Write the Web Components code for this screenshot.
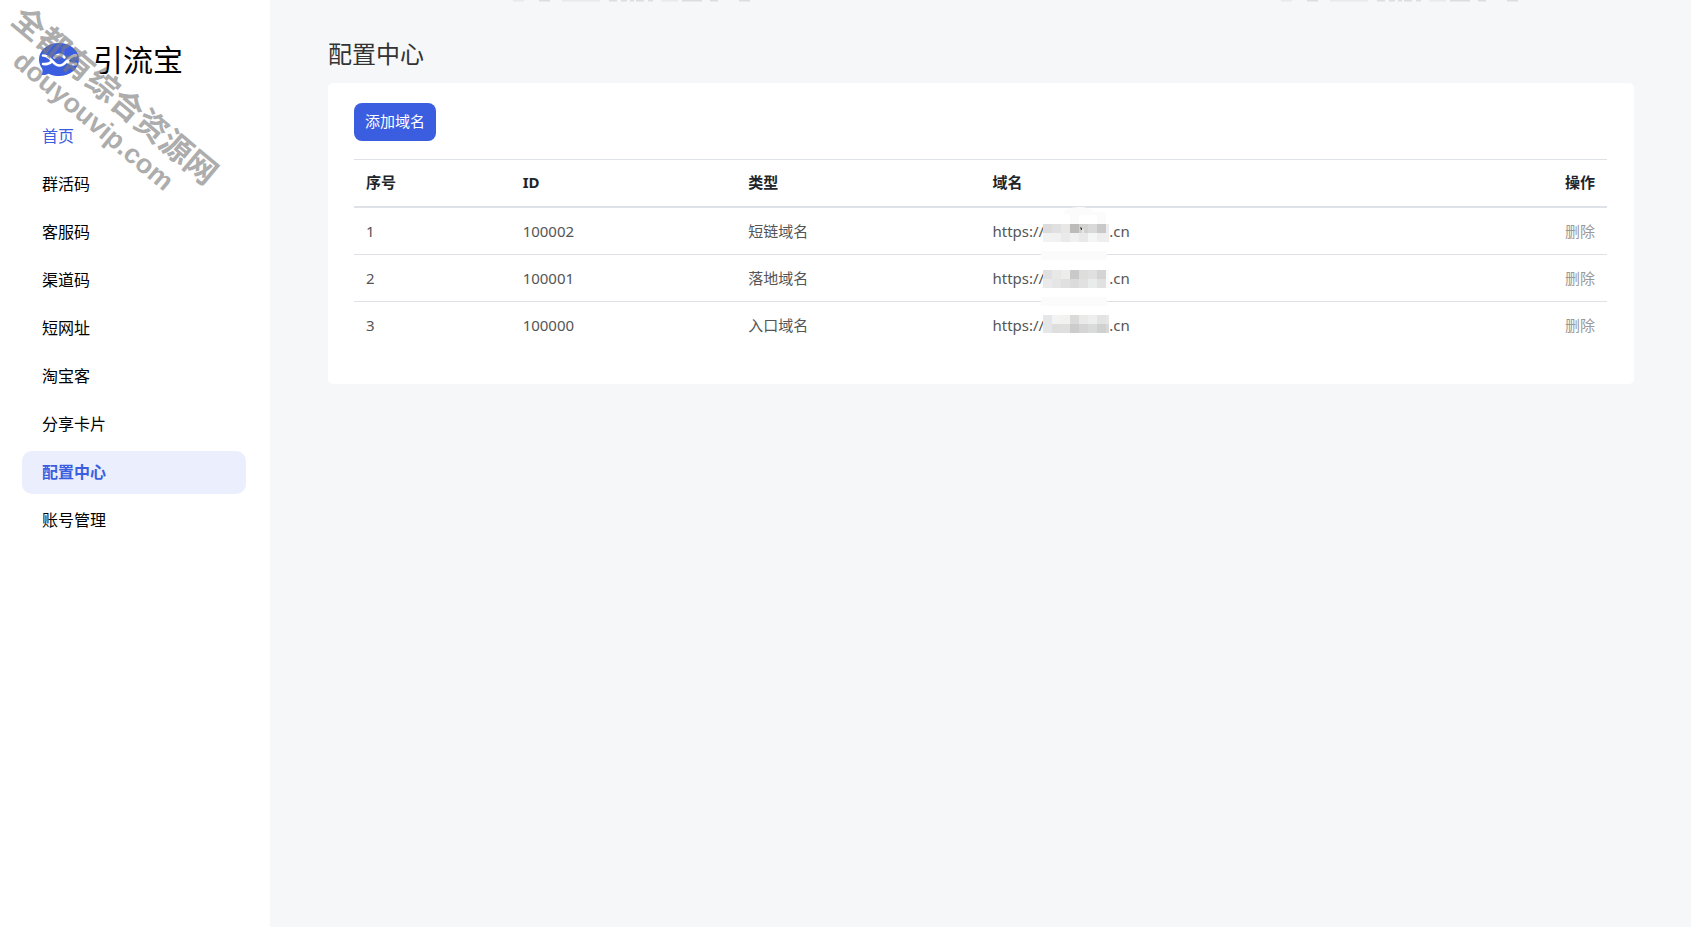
<!DOCTYPE html>
<html lang="zh-CN">
<head>
<meta charset="utf-8">
<meta name="viewport" content="width=device-width, initial-scale=1">
<title>配置中心 - 引流宝</title>
<style>
  body { margin: 0; background: #f5f7f9; color: #212529; font-family: "Noto Sans", "Noto Sans CJK SC", sans-serif; font-size: 15px; }
</style>
</head>
<body>
<app-shell>
  <brand-logo slot="side" name="引流宝"></brand-logo>
  <side-nav slot="side">
    <nav-item tone="home">首页</nav-item>
    <nav-item>群活码</nav-item>
    <nav-item>客服码</nav-item>
    <nav-item>渠道码</nav-item>
    <nav-item>短网址</nav-item>
    <nav-item>淘宝客</nav-item>
    <nav-item>分享卡片</nav-item>
    <nav-item active>配置中心</nav-item>
    <nav-item>账号管理</nav-item>
  </side-nav>
  <page-title>配置中心</page-title>
  <content-card>
    <primary-button>添加域名</primary-button>
    <domain-table></domain-table>
  </content-card>
</app-shell>
<water-mark></water-mark>
<edge-mark></edge-mark>

<script>
const define = (name, html, setup) => {
  const template = document.createElement('template');
  template.innerHTML = html;
  customElements.define(name, class extends HTMLElement {
    constructor() {
      super();
      this.attachShadow({ mode: 'open' }).append(template.content.cloneNode(true));
    }
    connectedCallback() { if (setup) setup(this, this.shadowRoot); }
  });
};

define('app-shell', `
<style>
  :host { display: grid; grid-template-columns: 270px minmax(0, 1fr); min-height: 100vh; }
  aside { background: #fff; }
  main { padding: 36px 57px 36px 58px; }
</style>
<aside><slot name="side"></slot></aside>
<main><slot></slot></main>`);

define('brand-logo', `
<style>
  :host { display: flex; align-items: center; gap: 14px; height: 75px; padding: 22px 0 18px 39px; color: #000; font-size: 30px; line-height: 38px; }
  svg { width: 40px; height: 34px; flex: none; }
</style>
<svg viewBox="0 0 40 34" aria-hidden="true">
  <path fill="#3b5ee0" d="M20 0C31 0 40 7 40 16.500C40 26 31 33 20 33C16 33 12.500 32.200 9.500 30.700C7.500 31.800 5 32.300 2.500 32C3.500 30 3.800 28 3.300 26C1.200 23 0 20 0 16.500C0 7 9 0 20 0Z"/>
  <path fill="none" stroke="#fff" stroke-width="2.600" stroke-linecap="round" d="M4 12.500C13 12.500 13 22.500 20.500 22.500C28 22.500 28 12.500 37 12.500M4 21C8 21.500 11 20.500 12.500 18.500M15.500 14.500C18 11 23 11 25.500 14.500M28.500 18.500C30 20.500 33 21.500 37 21"/>
</svg>
<span id="name"></span>`, (el, root) => { root.getElementById('name').textContent = el.getAttribute('name'); });

define('side-nav', `
<style>
  :host { display: block; padding: 0 24px 0 22px; }
  nav { display: flex; flex-direction: column; gap: 5px; }
</style>
<nav><slot></slot></nav>`);

define('nav-item', `
<style>
  :host { display: block; }
  a { display: block; height: 43px; padding-left: 20px; border-radius: 10px; color: #000; font-size: 16px; line-height: 42px; text-decoration: none; }
  :host([tone="home"]) a { color: #3b5ee0; }
  :host([active]) a { background: #eaeefd; color: #3b5ee0; font-weight: 700; }
</style>
<a href="#"><slot></slot></a>`);

define('page-title', `
<style>
  :host { display: block; margin-bottom: 11px; }
  h1 { margin: 0; color: #333; font-size: 24px; line-height: 36px; font-weight: 400; }
</style>
<h1><slot></slot></h1>`);

define('content-card', `
<style>
  :host { display: block; padding: 20px 27px 36px 26px; border-radius: 5px; background: #fff; }
</style>
<slot></slot>`);

define('primary-button', `
<style>
  :host { display: block; margin-bottom: 18px; }
  button { display: block; height: 38px; padding: 0 11px 2px; border: 0; border-radius: 8px; background: #3b5ee0; color: #fff; font: inherit; line-height: 36px; cursor: pointer; }
</style>
<button type="button"><slot></slot></button>`);

// Hides the private part of a domain behind 9px squares.
define('pixel-mask', `
<style>
  :host { display: block; position: relative; width: 65px; height: 18px; }
  svg { position: absolute; left: -1px; top: 0; overflow: visible; }
</style>
<svg width="66" height="18" aria-hidden="true"></svg>`, (el, root) => {
  const cells = el.getAttribute('cells').split('/').map(r => r.split(' '));
  const rect = (x, y, w, h, fill) => `<rect x="${x}" y="${y}" width="${w}" height="${h}" fill="${fill}"/>`;
  let out = '';
  if (el.hasAttribute('ghost')) out += '<path d="M19 -10Q25 -17 36 -17Q46 -17 51 -12H60Q63 -11 63 -8V0H54V-9H36V0H27V-10Z" fill="#fbfbfb"/>';
  cells.forEach((row, y) => row.forEach((c, i) => {
    const start = i * 9;
    out += rect(start, y * 9, Math.min(9, 66 - start), 9, '#' + c);
  }));
  if (el.hasAttribute('ghost')) out += '<path d="M37 3l2 1v2h-1z" fill="#333"/><path d="M40 5v4" stroke="#fffce8"/>';
  if (el.hasAttribute('strip')) out += rect(-2, 27, 66, 9, '#fbfbfb');
  root.querySelector('svg').innerHTML = `<g transform="translate(0 ${el.getAttribute('drop')})">${out}</g>`;
});

define('domain-table', `
<style>
  :host { display: block; }
  table { width: 100%; border-collapse: separate; border-spacing: 0; table-layout: fixed; line-height: 22px; }
  .no { width: 12.5%; } .id { width: 18%; } .type { width: 19.5%; } .act { width: 10%; }
  th, td { height: 22px; padding: 12px; text-align: left; white-space: nowrap; border-top: 1px solid #dee2e6; }
  th { color: #212529; font-weight: 700; padding: 11px 12px 13px; }
  thead th { border-bottom: 2px solid #dee2e6; }
  td { color: #555; }
  tbody tr:first-child td { border-top: 0; }
  th:last-child, td:last-child { text-align: right; }
  td a { color: #999; text-decoration: none; }
  .url { display: flex; align-items: center; height: 22px; }
</style>
<table>
  <colgroup><col class="no"><col class="id"><col class="type"><col><col class="act"></colgroup>
  <thead><tr><th scope="col">序号</th><th scope="col">ID</th><th scope="col">类型</th><th scope="col">域名</th><th scope="col">操作</th></tr></thead>
  <tbody></tbody>
</table>`, (el, root) => {
  const rows = [
    ['1', '100002', '短链域名', 'ghost strip drop="2"', 'dcdcdd e0e0e1 e8e7e5 bdbbba d2d2d2 d8d9d8 c8c8c9 ececec/f2f2f2 f1f1f1 eaeaeb f0f0f1 e9e9e9 f3f6f5 eeeeef efefef'],
    ['2', '100001', '落地域名', 'strip drop="1"', 'dfe0e2 e8e8e9 ededec c9c9c9 dddddb e0e0e0 d4d4d5 fafafa/eaeaeb e5e5e6 e0e0e1 dcdbdb e2e1e1 e8ecea e1e1e2 fafafa'],
    ['3', '100000', '入口域名', 'drop="-1"', 'e4e6e7 f1f4f3 f2f3f1 dadad8 eaeaeb eeeeee e3e3e4 e7e7e8/e5e6e8 dededf dfdfdf cdcccd d5d5d6 d8dbda d1d0d1 d8d8d9']
  ];
  root.querySelector('tbody').innerHTML = rows.map(([no, id, type, flags, cells]) =>
    `<tr><td>${no}</td><td>${id}</td><td>${type}</td><td><div class="url">https://<pixel-mask ${flags} cells="${cells}"></pixel-mask>.cn</div></td><td><a href="#">删除</a></td></tr>`).join('');
});

define('water-mark', `
<style>
  :host { position: absolute; left: 29px; top: -1px; transform: rotate(40deg); transform-origin: 0 0; color: rgba(124, 124, 124, .64); font-weight: 700; white-space: nowrap; pointer-events: none; }
  div { font-size: 32px; line-height: 36px; }
  .site { padding-left: 28px; font-family: "Liberation Sans", sans-serif; font-size: 27px; line-height: 32px; }
</style>
<div>全都有综合资源网</div>
<div class="site">douyouvip.com</div>`);

// Lower edge of the repeated page mark that runs off the top of the window.
define('edge-mark', `
<style>
  :host { position: absolute; left: 270px; right: 0; top: 0; height: 3px; overflow: hidden; pointer-events: none; }
  svg { display: block; }
</style>
<svg width="1300" height="3" aria-hidden="true">
  <g id="m" fill="none" stroke="#dcdde0" stroke-width="3">
    <path stroke="#e9eaeb" d="M243 0h11M292 0h38M391 0h17"/>
    <path d="M269 0h11M339 0h8M351 0h6M360 0h4M366 0h8M378 0h5M412 0h20M440 0h8M469 0h11"/>
  </g>
  <use href="#m" x="768"/>
</svg>`);
</script>
</body>
</html>
